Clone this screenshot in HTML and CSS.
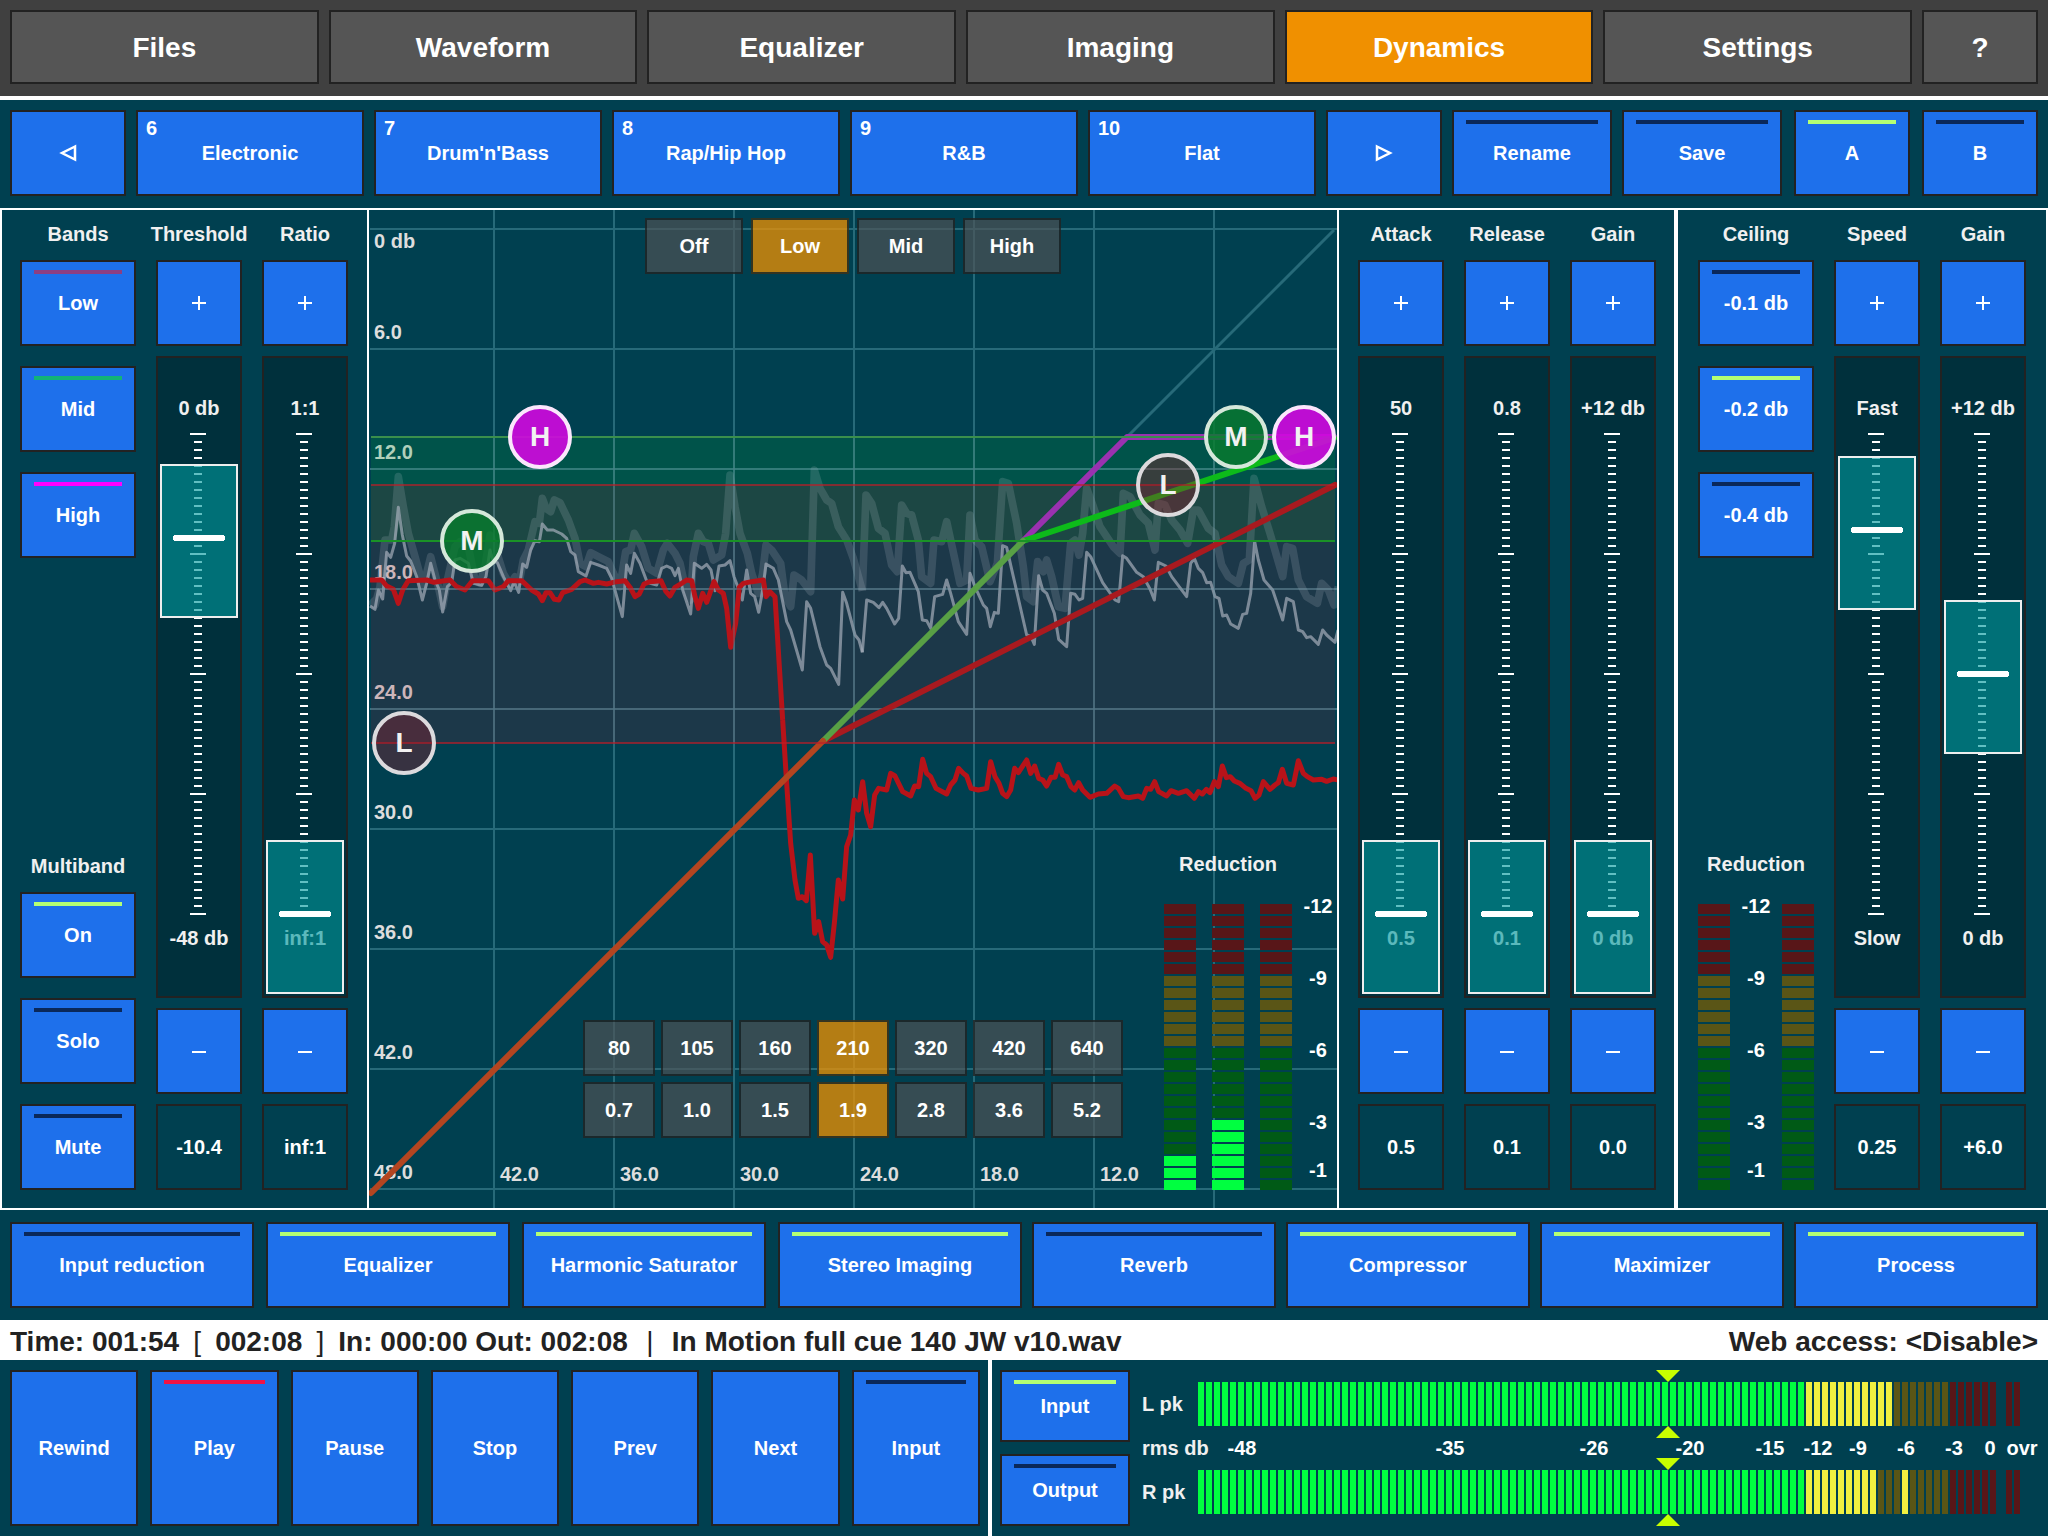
FILE: index.html
```html
<!DOCTYPE html>
<html lang="en">
<head>
<meta charset="utf-8">
<title>Dynamics</title>
<link rel="stylesheet" href="styles.css">
</head>
<body>
<svg class="defs" aria-hidden="true">
  <symbol id="plus" viewBox="0 0 16 16"><path d="M8 1v14M1 8h14" stroke="#fff" stroke-width="2"/></symbol>
  <symbol id="minus" viewBox="0 0 16 16"><path d="M1 9h14" stroke="#fff" stroke-width="2"/></symbol>
  <symbol id="prev" viewBox="0 0 18 18"><path d="M16 2.500 3 9l13 6.500z" fill="none" stroke="#fff" stroke-width="2.500"/></symbol>
  <symbol id="next" viewBox="0 0 18 18"><path d="M2 2.500 15 9 2 15.500z" fill="none" stroke="#fff" stroke-width="2.500"/></symbol>
</svg>

<nav class="tabs">
  <button class="tab">Files</button>
  <button class="tab">Waveform</button>
  <button class="tab">Equalizer</button>
  <button class="tab">Imaging</button>
  <button class="tab active">Dynamics</button>
  <button class="tab">Settings</button>
  <button class="tab help">?</button>
</nav>

<section class="bar presets">
  <div class="preset-list">
    <button class="btn narrow" aria-label="Previous presets"><svg class="arrow"><use href="#prev"/></svg></button>
    <button class="btn preset"><span class="num">6</span>Electronic</button>
    <button class="btn preset"><span class="num">7</span>Drum'n'Bass</button>
    <button class="btn preset"><span class="num">8</span>Rap/Hip Hop</button>
    <button class="btn preset"><span class="num">9</span>R&amp;B</button>
    <button class="btn preset"><span class="num">10</span>Flat</button>
    <button class="btn narrow" aria-label="Next presets"><svg class="arrow"><use href="#next"/></svg></button>
    <button class="btn led action">Rename</button>
    <button class="btn led action">Save</button>
  </div>
  <div class="ab">
    <button class="btn led on narrow" aria-pressed="true">A</button>
    <button class="btn led narrow" aria-pressed="false">B</button>
  </div>
</section>

<main class="main">
  <section class="panel bands-panel">
    <div class="stack">
      <div class="group">
        <h2 class="head">Bands</h2>
        <button class="btn led low">Low</button>
        <button class="btn led mid">Mid</button>
        <button class="btn led high">High</button>
      </div>
      <div class="group">
        <h2 class="head">Multiband</h2>
        <button class="btn led on" aria-pressed="true">On</button>
        <button class="btn led" aria-pressed="false">Solo</button>
        <button class="btn led" aria-pressed="false">Mute</button>
      </div>
    </div>
    <div class="channel">
      <label class="head" for="threshold">Threshold</label>
      <button class="btn" aria-label="Threshold up"><svg class="sign"><use href="#plus"/></svg></button>
      <div class="slider"><span class="top">0 db</span><span class="ticks"></span><span class="bottom">-48 db</span><input type="range" id="threshold" min="-48" max="0" step="0.1" value="-10.4"></div>
      <button class="btn" aria-label="Threshold down"><svg class="sign"><use href="#minus"/></svg></button>
      <output class="value" for="threshold">-10.4</output>
    </div>
    <div class="channel">
      <label class="head" for="ratio">Ratio</label>
      <button class="btn" aria-label="Ratio up"><svg class="sign"><use href="#plus"/></svg></button>
      <div class="slider"><span class="top">1:1</span><span class="ticks"></span><span class="bottom">inf:1</span><input type="range" id="ratio" min="0" max="100" value="0"></div>
      <button class="btn" aria-label="Ratio down"><svg class="sign"><use href="#minus"/></svg></button>
      <output class="value" for="ratio">inf:1</output>
    </div>
  </section>

  <section class="graph">
    <svg class="plot" viewBox="369 210 968 998" role="img" aria-label="Compressor curves">
      <g class="grid">
        <path d="M494 210V1208M614 210V1208M734 210V1208M854 210V1208M974 210V1208M1094 210V1208M1214 210V1208"/>
        <path d="M370 229H1337M370 349H1337M370 469H1337M370 589H1337M370 709H1337M370 829H1337M370 949H1337M370 1069H1337M370 1189H1337"/>
        <path class="unity" d="M1127 437 1334 230"/>
      </g>
      <g class="axis">
        <text x="374" y="248">0 db</text><text x="374" y="339">6.0</text><text x="374" y="459">12.0</text>
        <text x="374" y="579">18.0</text><text x="374" y="699">24.0</text><text x="374" y="819">30.0</text>
        <text x="374" y="939">36.0</text><text x="374" y="1059">42.0</text><text x="374" y="1179">48.0</text>
        <text x="500" y="1181">42.0</text><text x="620" y="1181">36.0</text><text x="740" y="1181">30.0</text>
        <text x="860" y="1181">24.0</text><text x="980" y="1181">18.0</text><text x="1100" y="1181">12.0</text>
      </g>
      <rect x="371" y="437" width="964" height="104" fill="rgba(0,160,50,.2)"/>
      <rect x="371" y="485" width="964" height="258" fill="rgba(140,24,45,.2)"/>

      <g class="peak" transform="translate(360 400) scale(.333333)">
        <polyline points="30,600 45,615 60,560 75,420 95,420 103,380 115,230 130,320 145,400 165,470 190,560 212,470 235,560 248,620 262,540 285,440 300,425 325,440 345,540 360,550 375,500 390,405 405,440 430,520 450,555 465,530 478,545 490,480 505,450 525,365 538,370 547,295 558,325 572,335 583,300 600,308 625,360 645,415 660,490 678,500 692,458 715,470 745,485 760,520 780,560 797,455 812,450 823,400 845,440 865,505 890,520 910,450 922,430 945,460 960,490 975,560 992,600 1000,470 1015,400 1030,425 1045,430 1060,480 1085,465 1097,400 1110,225 1125,320 1140,400 1162,460 1175,520 1195,580 1208,520 1218,435 1235,450 1262,490 1275,590 1292,620 1302,525 1325,540 1352,575 1363,210 1380,265 1400,300 1415,310 1435,380 1460,420 1480,475 1507,572"/>
      </g>
      <g class="peak" transform="translate(860 400) scale(.333333)">
        <polyline points="7,572 18,285 35,310 55,385 75,400 95,495 112,515 125,315 140,340 155,345 175,420 185,530 212,550 222,420 245,425 260,365 285,480 300,550 320,540 330,345 345,420 365,440 390,545 412,490 428,245 445,250 470,370 490,500 500,590 520,605 533,485 550,515 560,480 575,530 595,620 615,625 632,430 645,420 657,465 668,400 680,265 700,320 720,380 760,440 780,460 790,280 810,290 840,345 865,370 885,450 895,310 915,315 935,360 960,390 983,430 1000,330 1015,330 1045,385 1065,400 1085,495 1105,530 1135,550 1150,490 1168,480 1182,235 1205,320 1230,400 1268,530 1280,440 1298,445 1315,540 1340,590 1372,610 1385,550 1405,570 1422,615 1435,560"/>
      </g>
      <g class="signal" transform="translate(360 400) scale(.333333)">
        <polyline points="30,618 45,628 55,570 68,597 80,457 92,472 104,430 115,322 127,405 140,468 152,483 170,530 187,600 200,550 212,490 225,540 238,570 248,636 262,560 275,548 285,480 300,475 325,490 340,550 365,556 378,530 390,450 400,485 412,488 430,530 452,572 462,545 476,577 488,492 500,502 512,450 525,422 538,425 547,372 562,390 580,390 605,402 620,415 632,455 645,465 655,515 678,528 692,487 715,495 740,505 755,535 787,650 800,495 812,520 823,460 840,490 862,548 890,555 905,505 920,498 935,505 945,527 955,505 968,570 992,642 1003,490 1025,505 1040,493 1053,510 1065,572 1077,498 1095,495 1110,482 1122,530 1135,565 1147,600 1160,510 1172,580 1184,590 1196,637 1208,570 1218,492 1240,505 1255,540 1280,665 1292,690 1327,810 1340,605 1352,625 1380,740 1400,795 1412,805 1436,853 1448,577 1460,610 1485,705 1497,720 1507,757"/>
      </g>
      <g class="signal" transform="translate(860 400) scale(.333333)">
        <polyline points="7,757 20,600 40,607 57,623 68,607 80,625 104,672 116,655 127,498 138,518 150,517 175,575 187,660 200,662 212,685 224,590 248,583 260,540 272,580 295,665 320,703 330,520 345,560 370,615 380,625 391,680 403,637 415,640 428,437 440,442 460,530 500,705 512,708 523,733 536,527 548,570 560,580 583,640 596,718 620,740 632,580 645,583 657,600 668,595 680,457 692,470 728,548 765,600 776,605 788,467 800,475 830,517 850,530 870,567 883,600 895,487 918,498 935,530 980,590 992,490 1003,475 1015,505 1028,518 1040,548 1052,547 1065,590 1077,595 1088,648 1100,645 1112,672 1135,685 1148,643 1160,640 1172,580 1184,425 1195,480 1212,540 1238,570 1268,660 1280,595 1300,605 1315,690 1328,695 1340,713 1352,710 1375,733 1388,690 1400,705 1425,727 1434,690"/>
      </g>
      <g class="reduced" transform="translate(360 400) scale(.333333)">
        <polyline points="30,540 65,540 80,558 100,568 115,610 128,570 145,542 200,540 222,547 270,540 290,560 315,570 338,542 385,542 405,570 430,560 445,542 485,542 515,570 535,582 547,602 558,578 570,578 583,598 597,600 608,578 635,568 660,545 675,540 700,550 715,547 740,552 770,545 795,542 812,565 825,590 838,582 852,552 870,545 903,542 918,575 930,588 945,562 965,550 980,540 995,542 1005,590 1015,625 1028,580 1040,607 1062,545 1075,570 1090,580 1100,625 1112,742 1127,670 1138,562 1150,550 1175,545 1210,540 1218,590 1230,575 1245,590 1268,960"/>
      </g>
      <g class="reduced" transform="translate(770 720) scale(.333333)">
        <polyline points="38,0 50,190 62,370 75,480 85,535 97,530 109,542 121,405 134,640 146,605 158,665 170,675 182,712 193,610 205,480 218,537 230,380 242,345 253,240 265,270 278,185 290,280 302,320 314,225 326,205 350,210 362,160 375,168 398,215 422,228 434,198 446,200 458,118 470,160 482,170 498,205 530,222 542,195 555,180 566,145 580,160 590,168 603,205 625,210 650,205 662,125 675,170 687,190 698,220 710,230 722,210 734,145 745,158 770,120 782,160 794,138 806,175 818,180 830,198 843,172 855,172 866,133 878,165 890,170 903,200 914,210 926,188 938,210 960,232 985,222 1010,220 1034,198 1045,205 1060,230 1075,233 1105,228 1118,235 1130,205 1142,208 1154,185 1166,215 1190,228 1203,212 1225,220 1250,212 1273,235 1285,215 1297,222 1309,208 1320,218 1333,185 1345,200 1357,138 1369,173 1381,170 1393,183 1410,190 1428,205 1443,212 1455,235 1467,225 1480,185 1500,208 1515,195 1525,188 1537,148 1550,190 1570,195 1585,122 1600,160 1612,170 1630,180 1655,178 1670,184 1690,177 1706,180"/>
      </g>
      <g class="overgrid">
        <path d="M494 437V743M614 437V743M734 437V743M854 437V743M974 437V743M1094 437V743M1214 437V743"/>
        <path d="M370 469H1337M370 589H1337M370 709H1337"/>
      </g>

      <g class="curve">
        <path stroke="#9a31b0" d="M1023 541 1127 437H1334"/>
        <path stroke="#0dbb1a" d="M1023 541 1334 438"/>
        <path stroke="#a91a1f" d="M823 741 1335 485"/>
        <path stroke="#58a045" d="M823 741 1023 541"/>
        <path stroke="#b34520" d="M371 1193 823 741"/>
      </g>
      <g class="limits">
        <path stroke="#3a8f4c" d="M371 437H1335"/>
        <path stroke="#1a9226" d="M371 541H1335"/>
        <path stroke="#c01c26" stroke-opacity=".65" d="M371 485H1335M371 743H1335"/>
      </g>

      <g class="handles">
        <circle class="h" cx="540" cy="437" r="30"/><text x="540" y="446">H</text>
        <circle class="m" cx="472" cy="541" r="30"/><text x="472" y="550">M</text>
        <circle class="l" cx="404" cy="743" r="30"/><text x="404" y="752">L</text>
        <circle class="l" cx="1168" cy="485" r="30"/><text x="1168" y="494">L</text>
        <circle class="m" cx="1236" cy="437" r="30"/><text x="1236" y="446">M</text>
        <circle class="h" cx="1304" cy="437" r="30"/><text x="1304" y="446">H</text>
      </g>
    </svg>

    <div class="modes">
      <button class="chip">Off</button>
      <button class="chip active">Low</button>
      <button class="chip">Mid</button>
      <button class="chip">High</button>
    </div>

    <div class="crossovers">
      <button class="chip">80</button><button class="chip">105</button><button class="chip">160</button><button class="chip active">210</button><button class="chip">320</button><button class="chip">420</button><button class="chip">640</button>
      <button class="chip">0.7</button><button class="chip">1.0</button><button class="chip">1.5</button><button class="chip active">1.9</button><button class="chip">2.8</button><button class="chip">3.6</button><button class="chip">5.2</button>
    </div>

    <div class="reduction band-reduction">
      <div class="title">Reduction</div>
      <div class="columns">
        <div class="meter"><span class="lit" style="height:36px"></span></div>
        <div class="meter"><span class="lit" style="height:72px"></span></div>
        <div class="meter"></div>
      </div>
      <div class="scale"><span>-12</span><span>-9</span><span>-6</span><span>-3</span><span>-1</span></div>
    </div>
  </section>

  <section class="panel dynamics-panel">
    <div class="channel">
      <label class="head" for="attack">Attack</label>
      <button class="btn" aria-label="Attack up"><svg class="sign"><use href="#plus"/></svg></button>
      <div class="slider"><span class="top">50</span><span class="ticks"></span><span class="bottom">0.5</span><input type="range" id="attack" min="0.5" max="50" step="0.1" value="0.5"></div>
      <button class="btn" aria-label="Attack down"><svg class="sign"><use href="#minus"/></svg></button>
      <output class="value" for="attack">0.5</output>
    </div>
    <div class="channel">
      <label class="head" for="release">Release</label>
      <button class="btn" aria-label="Release up"><svg class="sign"><use href="#plus"/></svg></button>
      <div class="slider"><span class="top">0.8</span><span class="ticks"></span><span class="bottom">0.1</span><input type="range" id="release" min="0.1" max="0.8" step="0.01" value="0.1"></div>
      <button class="btn" aria-label="Release down"><svg class="sign"><use href="#minus"/></svg></button>
      <output class="value" for="release">0.1</output>
    </div>
    <div class="channel">
      <label class="head" for="gain">Gain</label>
      <button class="btn" aria-label="Gain up"><svg class="sign"><use href="#plus"/></svg></button>
      <div class="slider"><span class="top">+12 db</span><span class="ticks"></span><span class="bottom">0 db</span><input type="range" id="gain" min="0" max="12" step="0.1" value="0"></div>
      <button class="btn" aria-label="Gain down"><svg class="sign"><use href="#minus"/></svg></button>
      <output class="value" for="gain">0.0</output>
    </div>
  </section>

  <section class="panel maximizer-panel">
    <div class="stack">
      <div class="group">
        <h2 class="head">Ceiling</h2>
        <button class="btn led" aria-pressed="false">-0.1 db</button>
        <button class="btn led on" aria-pressed="true">-0.2 db</button>
        <button class="btn led" aria-pressed="false">-0.4 db</button>
      </div>
      <div class="reduction">
        <div class="title">Reduction</div>
        <div class="columns">
          <div class="meter"></div>
          <div class="scale"><span>-12</span><span>-9</span><span>-6</span><span>-3</span><span>-1</span></div>
          <div class="meter"></div>
        </div>
      </div>
    </div>
    <div class="channel">
      <label class="head" for="speed">Speed</label>
      <button class="btn" aria-label="Speed up"><svg class="sign"><use href="#plus"/></svg></button>
      <div class="slider"><span class="top">Fast</span><span class="ticks"></span><span class="bottom">Slow</span><input type="range" id="speed" min="0" max="100" value="80"></div>
      <button class="btn" aria-label="Speed down"><svg class="sign"><use href="#minus"/></svg></button>
      <output class="value" for="speed">0.25</output>
    </div>
    <div class="channel">
      <label class="head" for="maxgain">Gain</label>
      <button class="btn" aria-label="Maximizer gain up"><svg class="sign"><use href="#plus"/></svg></button>
      <div class="slider"><span class="top">+12 db</span><span class="ticks"></span><span class="bottom">0 db</span><input type="range" id="maxgain" min="0" max="12" step="0.1" value="6"></div>
      <button class="btn" aria-label="Maximizer gain down"><svg class="sign"><use href="#minus"/></svg></button>
      <output class="value" for="maxgain">+6.0</output>
    </div>
  </section>
</main>

<section class="bar modules">
  <div class="module-group first">
    <button class="btn led">Input reduction</button>
    <button class="btn led on">Equalizer</button>
    <button class="btn led on">Harmonic Saturator</button>
    <button class="btn led on">Stereo Imaging</button>
  </div>
  <div class="module-group last">
    <button class="btn led">Reverb</button>
    <button class="btn led on">Compressor</button>
    <button class="btn led on">Maximizer</button>
    <button class="btn led on">Process</button>
  </div>
</section>

<div class="status">
  <div class="time">Time: 001:54<span class="sep">[</span>002:08<span class="sep">]</span>In: 000:00 Out: 002:08<span class="sep wide">|</span>In Motion full cue 140 JW v10.wav</div>
  <a class="web" href="#web">Web access: &lt;Disable&gt;</a>
</div>

<footer class="footer">
  <div class="transport">
    <button class="btn">Rewind</button>
    <button class="btn led play">Play</button>
    <button class="btn">Pause</button>
    <button class="btn">Stop</button>
    <button class="btn">Prev</button>
    <button class="btn">Next</button>
    <button class="btn led">Input</button>
  </div>
  <div class="monitor">
    <div class="source">
      <button class="btn led on" aria-pressed="true">Input</button>
      <button class="btn led" aria-pressed="false">Output</button>
    </div>
    <div class="levels">
      <span class="tag">L pk</span>
      <div class="level">
        <div class="strip"><i class="green" style="width:608px"></i><i class="yellow" style="width:88px"></i><i class="olive" style="width:56px"></i><i class="red" style="width:46px"></i></div>
        <div class="over"></div>
        <span class="marker"></span>
      </div>
      <span class="tag">rms db</span>
      <div class="ruler">
        <span style="--at:4">-48</span><span style="--at:30">-35</span><span style="--at:48">-26</span><span style="--at:60">-20</span><span style="--at:70">-15</span><span style="--at:76">-12</span><span style="--at:81">-9</span><span style="--at:87">-6</span><span style="--at:93">-3</span><span class="tight" style="--at:98">0</span><span class="tight" style="--at:102">ovr</span>
      </div>
      <span class="tag">R pk</span>
      <div class="level">
        <div class="strip"><i class="green" style="width:608px"></i><i class="yellow" style="width:72px"></i><i class="olive" style="width:24px"></i><i class="yellow" style="width:8px"></i><i class="olive" style="width:40px"></i><i class="red" style="width:46px"></i></div>
        <div class="over"></div>
        <span class="marker"></span>
      </div>
    </div>
  </div>
</footer>
</body>
</html>
```
FILE: styles.css
```css
:root {
  --bg: #004050;
  --edge: #222;
  --blue: #1e70eb;
  --text: #f0f0f0;
}

* { box-sizing: border-box; }

body {
  margin: 0;
  background: var(--bg);
  color: #fff;
  font: bold 20px/24px "Liberation Sans", Arial, sans-serif;
}

.defs { display: none; }

button {
  margin: 0;
  padding: 0;
  font: inherit;
  color: #fff;
  border: 2px solid var(--edge);
  white-space: nowrap;
}

/* top tabs */
.tabs {
  display: flex;
  gap: 10px;
  padding: 10px 10px 12px;
  background: #404040;
  border-bottom: 4px solid #fff;
}
.tab {
  flex: 1 1 0;
  height: 74px;
  padding-top: 2px;
  background: #555;
  font-size: 28px;
}
.tab.active { background: #f09000; }
.tab.help { flex: 0 0 116px; }

/* buttons */
.btn {
  display: flex;
  align-items: center;
  justify-content: center;
  position: relative;
  height: 86px;
  background: var(--blue);
}
.led::before {
  content: "";
  position: absolute;
  top: 8px;
  left: 12px;
  right: 12px;
  height: 4px;
  background: #0a285a;
}
.led.on::before { background: #b4ff74; }
.led.low::before { background: #8c3f83; }
.led.mid::before { background: #12b378; }
.led.high::before { background: #f0f; }
.led.play::before { background: #f01446; }
.arrow { width: 18px; height: 18px; }
.sign { width: 16px; height: 16px; }

.bar { display: flex; }
.presets { gap: 12px; padding: 10px 10px 12px; }
.preset-list { display: flex; flex: 1; gap: 10px; }
.ab { display: flex; gap: 12px; }
.narrow { width: 116px; flex: none; }
.preset { flex: 1 1 0; }
.action { width: 160px; flex: none; }
.num { position: absolute; top: 4px; left: 8px; }

/* main area */
.main {
  display: flex;
  border: 2px solid #fff;
}
.panel {
  display: flex;
  gap: 20px;
  padding: 12px 20px 18px;
}
.bands-panel { padding-left: 18px; padding-right: 19px; border-right: 2px solid #fff; }
.dynamics-panel { padding-left: 19px; padding-right: 18px; border-right: 4px solid #fff; }

.stack {
  display: flex;
  flex-direction: column;
  justify-content: space-between;
  width: 116px;
}
.group { display: flex; flex-direction: column; gap: 20px; }
.head {
  display: flex;
  justify-content: center;
  margin: 0;
  font: inherit;
  color: var(--text);
  white-space: nowrap;
}
.group .head { margin-bottom: -6px; }
.channel { display: flex; flex-direction: column; gap: 10px; width: 86px; }
.channel .head { margin-bottom: 4px; }
.value {
  display: flex;
  align-items: center;
  justify-content: center;
  height: 86px;
  border: 2px solid var(--edge);
}

/* vertical fader: scale, end labels and the range share one grid cell */
.slider {
  display: grid;
  height: 642px;
  padding: 2px;
  border: 2px solid var(--edge);
  background: #00303c;
  color: var(--text);
  text-align: center;
}
.slider > * { grid-area: 1 / 1; }
.top { align-self: start; margin-top: 36px; }
.bottom { align-self: end; margin-bottom: 44px; }
.ticks {
  justify-self: center;
  width: 16px;
  height: 482px;
  margin-top: 73px;
  margin-right: 2px;
  background:
    repeating-linear-gradient(#fff 0 2px, transparent 2px 120px),
    repeating-linear-gradient(#fff 0 2px, transparent 2px 8px) 50% 0 / 8px 100% no-repeat;
}
.slider input {
  appearance: none;
  -webkit-appearance: none;
  writing-mode: vertical-lr;
  direction: rtl;
  width: 78px;
  height: 634px;
  margin: 0;
  background: none;
}
.slider input::-webkit-slider-runnable-track { width: 78px; background: none; }
.slider input::-webkit-slider-thumb {
  -webkit-appearance: none;
  box-sizing: border-box;
  width: 78px;
  height: 154px;
  border: 2px solid #eee;
  border-radius: 0;
  background:
    linear-gradient(#fff, #fff) 50% 69px / 50px 6px no-repeat,
    linear-gradient(#fff, #fff) 50% 70px / 52px 4px no-repeat,
    rgba(0, 151, 157, .62);
}

/* graph */
.graph { position: relative; flex: 1; min-width: 0; border-right: 2px solid #fff; }
.plot { display: block; width: 100%; height: 998px; }
.grid path, .overgrid path { stroke: #276a79; stroke-width: 2; fill: none; }
.grid .unity { stroke-width: 3; }
.overgrid path { stroke: #648c9b; stroke-opacity: .3; }
.axis text { fill: #ddd; }
.peak polyline, .signal polyline, .reduced polyline { fill: none; stroke-linejoin: round; }
.peak polyline { stroke: #c8d2dc; stroke-opacity: .17; stroke-width: 23; }
.signal polyline { stroke: #a5aebb; stroke-opacity: .7; stroke-width: 9; }
.reduced polyline { stroke: #b81319; stroke-width: 15; }
.curve path { fill: none; stroke-width: 6; stroke-linejoin: round; stroke-linecap: round; }
.limits path { stroke-width: 2; }
.handles circle { stroke-width: 4; }
.handles .h { fill: rgba(210, 8, 224, .9); stroke: #fbe6fc; }
.handles .m { fill: rgba(8, 124, 45, .8); stroke: #d5e8da; }
.handles .l { fill: rgba(149, 26, 40, .37); stroke: #dcdadd; }
.handles text { fill: #f2f2f2; font-size: 28px; text-anchor: middle; }

.chip { height: 56px; background: rgba(80, 83, 86, .68); border-color: rgba(34, 34, 34, .8); background-clip: padding-box; }
.chip.active { background-color: rgba(240, 146, 0, .75); border-color: rgba(60, 50, 25, .85); }
.modes {
  position: absolute;
  top: 8px;
  left: 50%;
  transform: translateX(-50%);
  display: grid;
  grid-template-columns: repeat(4, 98px);
  gap: 8px;
}
.crossovers {
  position: absolute;
  bottom: 70px;
  left: 50%;
  transform: translateX(-50%);
  display: grid;
  grid-template-columns: repeat(7, 72px);
  gap: 6px;
}

/* reduction meters */
.title { margin-bottom: 28px; text-align: center; color: var(--text); }
.columns { display: flex; justify-content: space-between; }
.meter {
  display: flex;
  align-items: flex-end;
  width: 32px;
  height: 286px;
  background: linear-gradient(#581618 0 72px, #5a5516 72px 144px, #005a16 144px);
  -webkit-mask: repeating-linear-gradient(#000 0 10px, transparent 10px 12px);
  mask: repeating-linear-gradient(#000 0 10px, transparent 10px 12px);
}
.lit { width: 100%; background: #00ff40; }
.scale {
  display: grid;
  grid-template-rows: 72px 72px 72px 48px 22px;
  width: 34px;
  line-height: 4px;
  text-align: center;
}
.band-reduction {
  position: absolute;
  right: 2px;
  bottom: 18px;
  display: grid;
  grid-template-columns: 128px 34px;
  column-gap: 9px;
}
.band-reduction .title { grid-column: 1; }
.band-reduction .columns { grid-area: 2 / 1; }
.band-reduction .scale { grid-area: 2 / 2; }

/* modules */
.modules { gap: 10px; padding: 12px 10px; }
.module-group { display: flex; }
.module-group .btn { flex: 1 1 0; }
.module-group.first { flex: 1 1 36px; gap: 12px; }
.module-group.last { flex: 1 1 30px; gap: 10px; }

/* status line */
.status {
  display: flex;
  justify-content: space-between;
  padding: 4px 10px 0;
  background: #fff;
  color: #222;
  font-size: 28px;
  line-height: 36px;
  white-space: nowrap;
}
.sep { display: inline-block; width: 36px; text-align: center; font-weight: normal; }
.sep.wide { width: 44px; }
.web { color: inherit; text-decoration: none; }

/* footer */
.footer { display: flex; }
.transport {
  display: flex;
  flex: 1;
  gap: 12px;
  padding: 10px 8px 10px 10px;
  border-right: 4px solid #fff;
}
.transport .btn { flex: 1 1 0; height: 156px; }
.monitor { display: flex; gap: 12px; padding: 10px 20px 10px 8px; }
.source { display: flex; flex-direction: column; gap: 12px; width: 130px; }
.source .btn { height: 72px; }
.levels {
  display: grid;
  grid-template-columns: 56px 830px;
  grid-auto-rows: 44px;
  align-items: center;
  padding: 12px 0;
}
.tag { white-space: nowrap; color: var(--text); }
.level { position: relative; display: flex; gap: 10px; height: 44px; }
.strip, .over {
  -webkit-mask: repeating-linear-gradient(90deg, #000 0 6px, transparent 6px 8px);
  mask: repeating-linear-gradient(90deg, #000 0 6px, transparent 6px 8px);
}
.strip { display: flex; }
.over { width: 14px; background: #581618; }
.green { background: #00ff40; }
.yellow { background: #f0f040; }
.olive { background: #5a5516; }
.red { background: #581618; }
.marker { position: absolute; left: 458px; top: -12px; bottom: -12px; width: 24px; }
.marker::before, .marker::after {
  content: "";
  position: absolute;
  left: 0;
  width: 24px;
  height: 12px;
  background: #c8ff00;
}
.marker::before { top: 0; clip-path: polygon(0 0, 100% 0, 50% 100%); }
.marker::after { bottom: 0; clip-path: polygon(50% 0, 100% 100%, 0 100%); }
.ruler { display: grid; grid-template-columns: repeat(106, 8px); }
.ruler span { grid-row: 1; grid-column: var(--at) / span 5; text-align: center; }
.ruler .tight { grid-column: var(--at) / span 4; }
```
